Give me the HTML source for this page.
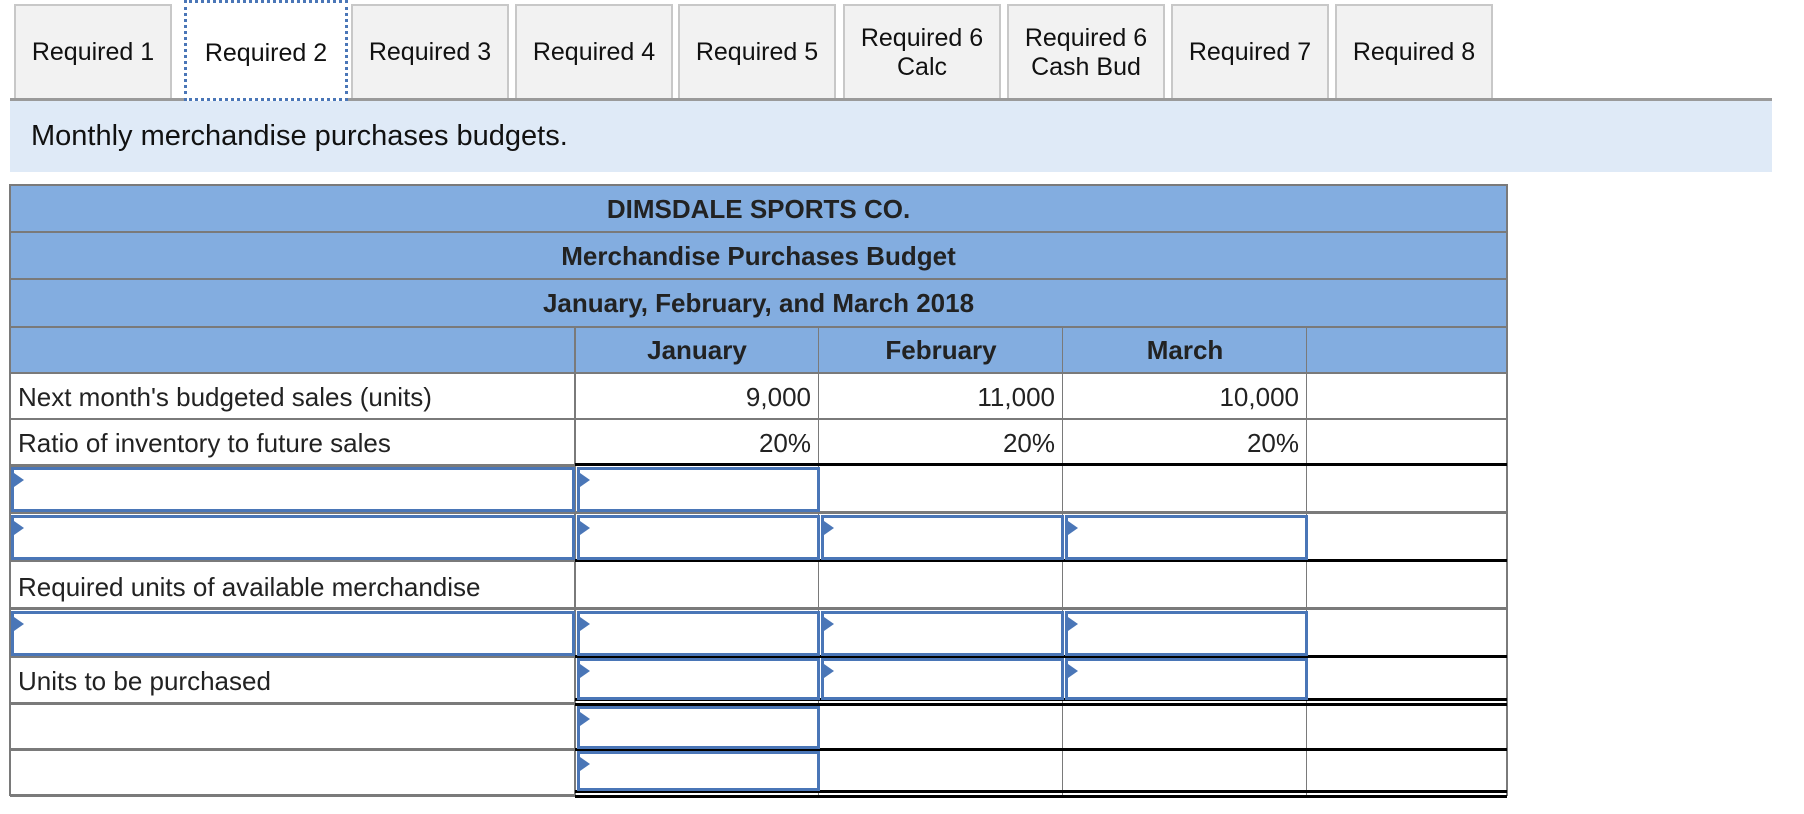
<!DOCTYPE html>
<html><head><meta charset="utf-8"><style>
body{margin:0;width:1804px;height:814px;background:#fff;position:relative;overflow:hidden;font-family:"Liberation Sans",Arial,sans-serif;color:#222}
.a{position:absolute;box-sizing:border-box}
.tab{position:absolute;top:4px;height:95px;width:158px;background:#f2f2f2;border:2px solid #c8c8c8;border-bottom:none;display:flex;align-items:center;justify-content:center;text-align:center;font-size:25px;line-height:29px;color:#111;box-sizing:border-box}
.hl{position:absolute;height:2px;background:#7a7a7a}
.vl{position:absolute;width:2px;background:#7a7a7a}
.bk{position:absolute;height:3px;background:#000}
.in{position:absolute;box-sizing:border-box;border:3px solid #4a76b7;background:#fff}
.in:before{content:"";position:absolute;left:0;top:3px;border-left:10px solid #4a76b7;border-top:7px solid transparent;border-bottom:7px solid transparent}
.hd{position:absolute;left:10px;width:1497px;text-align:center;font-weight:bold;font-size:26px;color:#222}
.t{position:absolute;font-size:26px;color:#222;white-space:nowrap}
</style></head><body>
<div class="tab" style="left:14px">Required 1</div>
<div class="tab" style="left:184px;width:164px;background:#fff;border:3px dotted #4a76b7;height:101px;top:0;padding-top:6px">Required 2</div>
<div class="tab" style="left:351px">Required 3</div>
<div class="tab" style="left:515px">Required 4</div>
<div class="tab" style="left:678px">Required 5</div>
<div class="tab" style="left:843px">Required 6<br>Calc</div>
<div class="tab" style="left:1007px">Required 6<br>Cash Bud</div>
<div class="tab" style="left:1171px">Required 7</div>
<div class="tab" style="left:1335px">Required 8</div>
<div class="a" style="left:10px;top:98px;width:1762px;height:3px;background:#9a9a9a"></div>
<div class="a" style="left:184px;top:97px;width:164px;height:4px;border-bottom:3px dotted #4a76b7;background:#fff"></div>
<div class="a" style="left:10px;top:101px;width:1762px;height:71px;background:#dfeaf7"></div>
<div class="t" style="left:31px;top:120px;font-size:29px;color:#111">Monthly merchandise purchases budgets.</div>

<!-- header -->
<div class="a" style="left:10px;top:184px;width:1497px;height:189px;background:#83ade0"></div>
<div class="hl" style="left:10px;top:184px;width:1497px"></div>
<div class="hl" style="left:10px;top:231px;width:1497px"></div>
<div class="hl" style="left:10px;top:278px;width:1497px"></div>
<div class="hl" style="left:10px;top:326px;width:1497px"></div>
<div class="hl" style="left:10px;top:372px;width:1497px"></div>
<div class="hd" style="top:194px">DIMSDALE SPORTS CO.</div>
<div class="hd" style="top:241px">Merchandise Purchases Budget</div>
<div class="hd" style="top:288px">January, February, and March 2018</div>
<div class="t" style="left:575px;width:244px;text-align:center;top:335px;font-weight:bold">January</div>
<div class="t" style="left:819px;width:244px;text-align:center;top:335px;font-weight:bold">February</div>
<div class="t" style="left:1063px;width:244px;text-align:center;top:335px;font-weight:bold">March</div>

<!-- grid -->
<div class="vl" style="left:9px;top:184px;height:612px"></div>
<div class="vl" style="left:1506px;top:184px;height:612px"></div>
<div class="vl" style="left:574px;top:326px;height:470px"></div>
<div class="vl" style="left:818px;top:326px;height:470px;width:1px"></div>
<div class="vl" style="left:1062px;top:326px;height:470px;width:1px"></div>
<div class="vl" style="left:1306px;top:326px;height:470px;width:1px"></div>
<div class="hl" style="left:10px;top:418px;width:1497px"></div>
<div class="hl" style="left:10px;top:464px;width:565px;height:3px"></div>
<div class="bk" style="left:575px;top:463px;width:932px"></div>
<div class="hl" style="left:10px;top:511px;width:1497px;height:3px"></div>
<div class="hl" style="left:10px;top:559px;width:565px;height:3px"></div>
<div class="bk" style="left:575px;top:559px;width:932px"></div>
<div class="hl" style="left:10px;top:607px;width:1497px;height:3px"></div>
<div class="hl" style="left:10px;top:655px;width:565px;height:3px"></div>
<div class="bk" style="left:575px;top:655px;width:932px"></div>
<div class="hl" style="left:10px;top:702px;width:565px;height:3px"></div>
<div class="bk" style="left:575px;top:698px;width:932px"></div>
<div class="bk" style="left:575px;top:703px;width:932px"></div>
<div class="hl" style="left:10px;top:748px;width:565px;height:3px"></div>
<div class="bk" style="left:575px;top:748px;width:932px"></div>
<div class="hl" style="left:10px;top:794px;width:565px;height:3px"></div>
<div class="bk" style="left:575px;top:790px;width:932px"></div>
<div class="bk" style="left:575px;top:795px;width:932px"></div>

<!-- text -->
<div class="t" style="left:18px;top:382px">Next month's budgeted sales (units)</div>
<div class="t" style="left:575px;width:236px;text-align:right;top:382px">9,000</div>
<div class="t" style="left:819px;width:236px;text-align:right;top:382px">11,000</div>
<div class="t" style="left:1063px;width:236px;text-align:right;top:382px">10,000</div>
<div class="t" style="left:18px;top:428px">Ratio of inventory to future sales</div>
<div class="t" style="left:575px;width:236px;text-align:right;top:428px">20%</div>
<div class="t" style="left:819px;width:236px;text-align:right;top:428px">20%</div>
<div class="t" style="left:1063px;width:236px;text-align:right;top:428px">20%</div>
<div class="t" style="left:18px;top:572px">Required units of available merchandise</div>
<div class="t" style="left:18px;top:666px">Units to be purchased</div>

<!-- inputs -->
<div class="in" style="left:11px;top:467px;width:564px;height:45px"></div>
<div class="in" style="left:577px;top:467px;width:243px;height:45px"></div>
<div class="in" style="left:11px;top:515px;width:564px;height:45px"></div>
<div class="in" style="left:577px;top:515px;width:243px;height:45px"></div>
<div class="in" style="left:821px;top:515px;width:243px;height:45px"></div>
<div class="in" style="left:1065px;top:515px;width:243px;height:45px"></div>
<div class="in" style="left:11px;top:611px;width:564px;height:45px"></div>
<div class="in" style="left:577px;top:611px;width:243px;height:45px"></div>
<div class="in" style="left:821px;top:611px;width:243px;height:45px"></div>
<div class="in" style="left:1065px;top:611px;width:243px;height:45px"></div>
<div class="in" style="left:577px;top:658px;width:243px;height:42px"></div>
<div class="in" style="left:821px;top:658px;width:243px;height:42px"></div>
<div class="in" style="left:1065px;top:658px;width:243px;height:42px"></div>
<div class="in" style="left:577px;top:706px;width:243px;height:43px"></div>
<div class="in" style="left:577px;top:751px;width:243px;height:40px"></div>
</body></html>
